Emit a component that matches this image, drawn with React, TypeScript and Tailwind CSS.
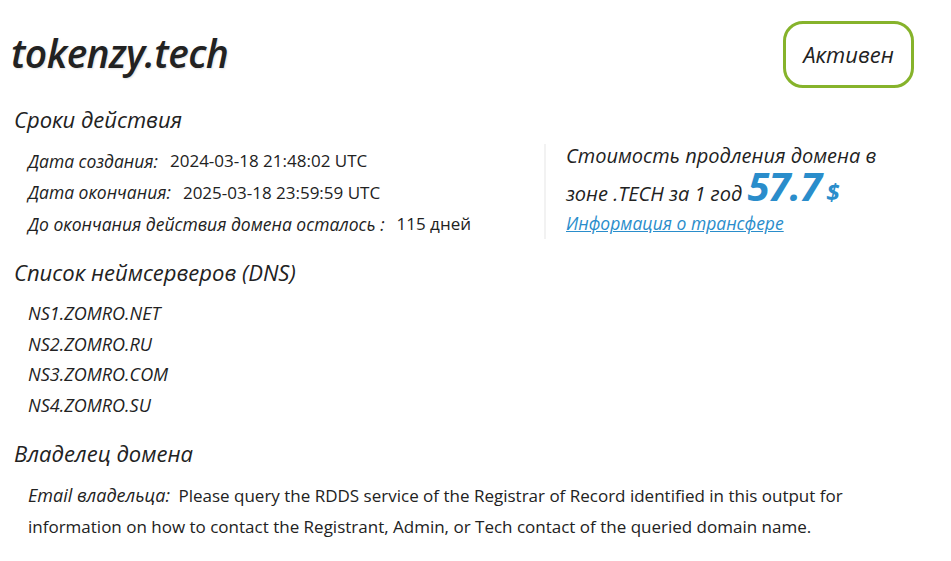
const italic = "font-['Open_Sans',sans-serif] italic";
const plain = "font-['Open_Sans',sans-serif]";

function Row({ label, value }: { label: string; value: string }) {
  return (
    <div className="h-[31.5px] flex items-center text-[#222]">
      <span className={`${italic} text-[17.5px]`}>{label}</span>
      <span className={`${plain} text-[17px] ml-[12px]`}>{value}</span>
    </div>
  );
}

export default function App() {
  return (
    <div className="w-[951px] h-[561px] bg-white text-[#222] overflow-hidden">
      {/* Header */}
      <div className="flex items-start justify-between pl-[11px] pr-[37px] pt-[21px]">
        <h1
          className={`${italic} font-semibold text-[39px] tracking-[-0.6px] leading-[56px] mt-[4px] [text-shadow:1px_1px_2px_rgba(0,0,0,0.12)]`}
        >
          tokenzy.tech
        </h1>
        <div
          className={`${italic} w-[131px] h-[67px] border-[3px] border-[#86b32b] rounded-[20px] flex items-center justify-center text-[22px]`}
        >
          Активен
        </div>
      </div>

      {/* Сроки действия */}
      <div className="flex pl-[14px] mt-[16px]">
        <div className="w-[530px]">
          <h2 className={`${italic} text-[22px] leading-[30px]`}>Сроки действия</h2>
          <div className="pl-[14px] mt-[11px]">
            <Row label="Дата создания:" value="2024-03-18 21:48:02 UTC" />
            <Row label="Дата окончания:" value="2025-03-18 23:59:59 UTC" />
            <Row label="До окончания действия домена осталось :" value="115 дней" />
          </div>
        </div>
        <div className="mt-[40px] border-l-2 border-[#f2f2f2] pl-[20px] h-[95px]">
          <div className={`${italic} text-[20px] leading-[30px] w-[330px] -mt-[3px]`}>
            Стоимость продления домена в зоне .TECH за 1 год{" "}
            <span className="text-[#2a8dcb] font-bold text-[40px] tracking-[-1px] leading-[30px]">57.7</span>{" "}
            <span className="text-[#2a8dcb] font-bold text-[24px] leading-[30px]">$</span>
          </div>
          <a
            href="#"
            className={`${italic} block text-[17.5px] leading-[24px] text-[#2a8dcb] underline mt-[2px]`}
          >
            Информация о трансфере
          </a>
        </div>
      </div>

      {/* DNS */}
      <div className="pl-[14px] mt-[17px]">
        <h2 className={`${italic} text-[22px] leading-[30px]`}>Список неймсерверов (DNS)</h2>
        <div className={`${italic} pl-[14px] mt-[12px] text-[18px]`}>
          {["NS1.ZOMRO.NET", "NS2.ZOMRO.RU", "NS3.ZOMRO.COM", "NS4.ZOMRO.SU"].map((ns) => (
            <div key={ns} className="h-[30.5px] flex items-center">
              {ns}
            </div>
          ))}
        </div>
      </div>

      {/* Owner */}
      <div className="pl-[14px] mt-[17px]">
        <h2 className={`${italic} text-[22px] leading-[30px]`}>Владелец домена</h2>
        <p className={`${plain} pl-[14px] mt-[12px] text-[17px] leading-[31px] w-[850px]`}>
          <span className={`${italic} text-[18px] mr-[4px]`}>Email владельца:</span>{" "}
          Please query the RDDS service of the Registrar of Record identified in this output for
          information on how to contact the Registrant, Admin, or Tech contact of the queried
          domain name.
        </p>
      </div>
    </div>
  );
}
